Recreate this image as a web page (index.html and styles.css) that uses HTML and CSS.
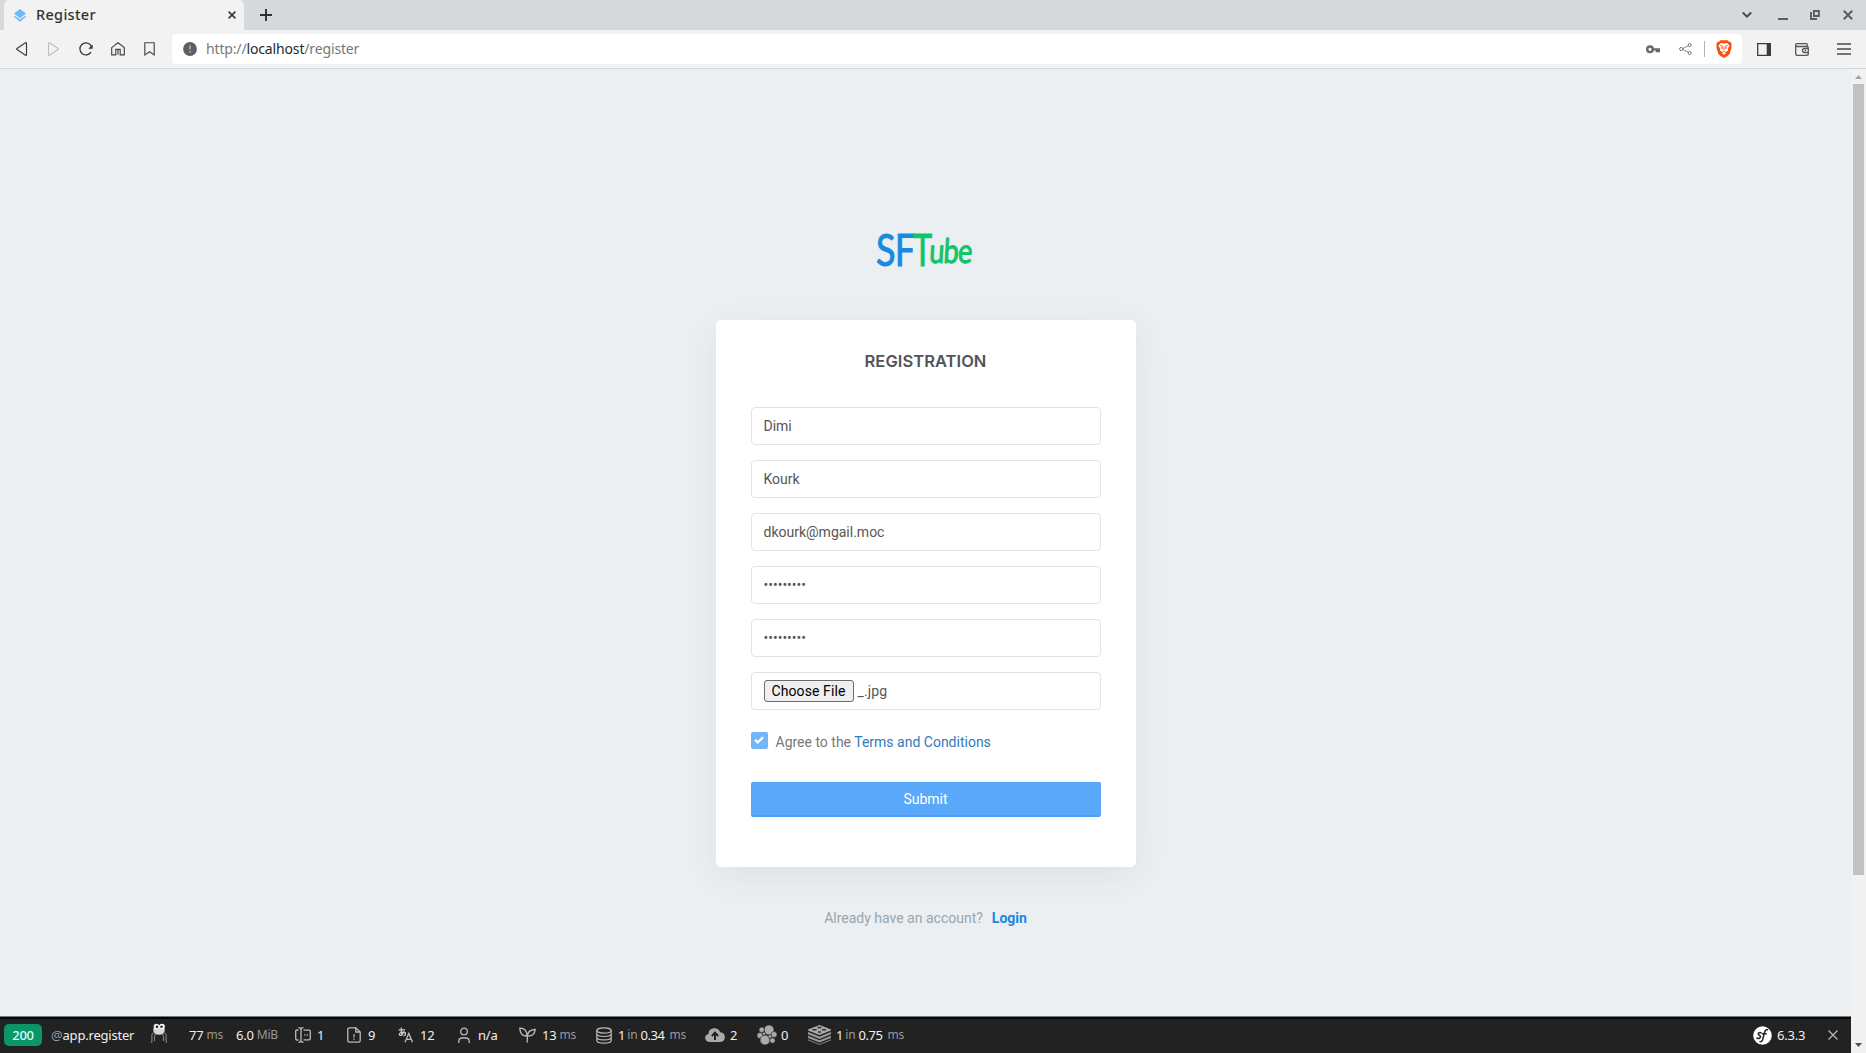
FILE: index.html
```html
<!DOCTYPE html>
<html lang="en">
<head>
<meta charset="utf-8">
<title>Register</title>
<link rel="stylesheet" href="styles.css">
</head>
<body>
<div class="window">
  <header class="tabstrip">
    <div class="tab">
      <svg class="favicon" width="12" height="13" viewBox="0 0 12 13"><path d="M6 0l6 4.600-6 4.600L0 4.600z" fill="#71b6f9"/><path d="M0 7.800l1.200-.9L6 10.600l4.800-3.700 1.200.9L6 12.800z" fill="#71b6f9"/></svg>
      <span class="tab-title">Register</span>
      <svg class="tab-close" width="8" height="8" viewBox="0 0 8 8"><path d="M.6.6l6.800 6.800M7.400.6L.6 7.400" stroke="#333" stroke-width="1.500"/></svg>
    </div>
    <svg class="new-tab" width="12" height="12" viewBox="0 0 12 12"><path d="M6 0v12M0 6h12" stroke="#303030" stroke-width="1.900"/></svg>
    <div class="window-controls">
      <svg width="10" height="8" viewBox="0 0 10 8"><path d="M.8 1.500L5 5.700l4.200-4.200" fill="none" stroke="#444a4e" stroke-width="2"/></svg>
      <svg width="10" height="10" viewBox="0 0 10 10"><path d="M0 9h10" stroke="#585e62" stroke-width="2"/></svg>
      <svg width="10" height="10" viewBox="0 0 10 10"><path d="M3.900 1h5v5h-5z M1 2v7h6" fill="none" stroke="#585e62" stroke-width="1.900"/></svg>
      <svg width="10" height="10" viewBox="0 0 10 10"><path d="M.8.8l8.400 8.400M9.200.8L.8 9.200" stroke="#585e62" stroke-width="2"/></svg>
    </div>
  </header>

  <nav class="navbar">
    <div class="nav-buttons">
      <svg width="12" height="14" viewBox="0 0 12 14"><path d="M9.500.8Q10.500.4 10.500 1.500v11Q10.500 13.600 9.500 13.200L1 7.500Q.4 7 1 6.500z" fill="none" stroke="#3b3e42" stroke-width="1.200"/></svg>
      <svg width="12" height="14" viewBox="0 0 12 14"><path d="M2.500.8Q1.500.4 1.500 1.500v11Q1.500 13.600 2.500 13.200L11 7.500Q11.600 7 11 6.500z" fill="none" stroke="#bcbfc1" stroke-width="1.100"/></svg>
      <svg width="14" height="14" viewBox="0 0 14 14"><path d="M12 10.200A6 6 0 1 1 11.600 3.200L12.600 5" fill="none" stroke="#303337" stroke-width="1.250"/><path d="M13.600 2.500v4.300H9.300z" fill="#303337"/></svg>
      <svg width="14" height="14" viewBox="0 0 14 14"><path d="M.7 5.600L7 .8l6.300 4.800v7.200H9.200V7.300H4.800v5.500H.7zM7 7.300v5.500" fill="none" stroke="#42464a" stroke-width="1.150"/></svg>
      <svg width="11" height="14" viewBox="0 0 11 14"><path d="M.8.7h9.400v12.200L5.500 9.800.8 12.900z" fill="none" stroke="#42464a" stroke-width="1.150"/></svg>
    </div>
    <div class="address">
      <svg width="14" height="14" viewBox="0 0 14 14"><circle cx="7" cy="7" r="6.900" fill="#5b6065"/><path d="M7 3.500v4M7 9v1.700" stroke="#adb0b2" stroke-width="1.600"/></svg>
      <span class="url">http://<b>localhost</b>/register</span>
      <div class="address-actions">
        <svg width="14" height="9" viewBox="0 0 14 9"><path d="M6.500 4.300H14M10.700 4.300v3M12.900 4.300v2.900" stroke="#686b6e" stroke-width="2.200"/><circle cx="4" cy="4.300" r="2.800" fill="none" stroke="#686b6e" stroke-width="2.400"/></svg>
        <svg width="13" height="12" viewBox="0 0 13 12"><path d="M3 6l7-3.700M3 6l7 3.700" stroke="#85888a"/><g fill="#fff" stroke="#777a7c"><circle cx="2.200" cy="6" r="1.600"/><circle cx="10.600" cy="2" r="1.500"/><circle cx="10.600" cy="10" r="1.500"/></g></svg>
        <i class="divider"></i>
        <svg width="16" height="18" viewBox="0 0 16 18"><path d="M4.500.2h7l1.600 1.600 1.500.2 1.200 2.400-.5 1.300.4 1.200-2 7-2.200 2.200L8 18l-3.500-1.900-2.200-2.200-2-7 .4-1.200-.5-1.300L1.400 2l1.500-.2z" fill="#fb5013"/><path d="M4.800 3L8 3.500 11.200 3l2.300 2.700-1.800 3 .4 1.700-2.500 1.700L8 11l-1.600 1.100-2.500-1.700.4-1.700-1.800-3zM6 12.900l2-1.200 2 1.200-2 1.800z" fill="#fff"/><path d="M4.300 5.500l2.400.6L7 8.500 5 7.600M11.700 5.500l-2.400.6L9 8.500l2-.9M8 8.500v2" fill="none" stroke="#fb5013" stroke-width=".9"/></svg>
      </div>
    </div>
    <div class="nav-tools">
      <svg width="14" height="13" viewBox="0 0 14 13"><path d="M.7.7h12.600v11.600H.7z" fill="none" stroke="#383d42" stroke-width="1.300"/><path d="M9.700 0H14v13H9.700z" fill="#383d42"/></svg>
      <svg width="14" height="13" viewBox="0 0 14 13"><path d="M12.300 3.500V1.600Q12.300.7 11.400.7H1.700Q.7.700.7 1.700v9.300q0 1.300 1.300 1.300h10q1.300 0 1.300-1.300V4.800q0-1.300-1.300-1.300H2Q.7 3.500.7 2M13.300 5.500h-3.500q-2.300 0-2.300 2t2.300 2h3.500M9.800 7.500H11" fill="none" stroke="#54585c" stroke-width="1.300"/></svg>
      <svg width="14" height="12" viewBox="0 0 14 12"><path d="M0 1h14M0 6h14M0 11h14" stroke="#484c50" stroke-width="1.400"/></svg>
    </div>
  </nav>

  <div class="viewport">
    <div class="page">
      <main class="content">
        <h1 class="logo"><span class="logo-s">SF</span><span class="logo-t">T</span><span class="logo-ube">ube</span></h1>
        <form class="card">
          <h2>Registration</h2>
          <div class="field">Dimi</div>
          <div class="field">Kourk</div>
          <div class="field">dkourk@mgail.moc</div>
          <div class="field password">•••••••••</div>
          <div class="field password">•••••••••</div>
          <div class="field file"><button type="button">Choose File</button><span>_.jpg</span></div>
          <div class="agree">
            <span class="checkbox"><svg width="10" height="8" viewBox="0 0 10 8"><path d="M1 3.800l2.700 2.600L9 1.200" fill="none" stroke="#fff" stroke-width="2.300"/></svg></span>
            <span>Agree to the <a>Terms and Conditions</a></span>
          </div>
          <button type="button" class="submit">Submit</button>
        </form>
        <p class="signin">Already have an account?<a>Login</a></p>
      </main>

      <footer class="debugbar">
        <div class="blocks">
          <div class="block"><span class="status">200</span></div>
          <div class="block route"><i>@</i>app.register</div>
          <div class="block"><svg class="lift" width="18" height="21" viewBox="0 0 18 21"><path d="M4.500 10Q1 9.500 2 15l-.3 5M13.500 10q3.500-.5 2.500 5l.3 5M5.500 11Q4 12 4.500 18M12.500 11q1.500 1 1 7" fill="none" stroke="#999" stroke-width=".9"/><ellipse cx="9" cy="7" rx="5.800" ry="4.800" fill="#d8d8d8"/><circle cx="6.500" cy="3.500" r="2.800" fill="#eee"/><circle cx="12" cy="3.500" r="2.800" fill="#fff"/><circle cx="7" cy="3.800" r="1.300" fill="#222"/><circle cx="11.500" cy="3.800" r="1.300" fill="#222"/></svg></div>
          <div class="block">77<i>ms</i></div>
          <div class="block">6.0<i>MiB</i></div>
          <div class="block g6"><svg width="16" height="16" viewBox="0 0 16 16"><path d="M3.500 3H2Q.7 3 .7 4.300v7.400Q.7 13 2 13h1.500M8.500 3.200h5.500q1.300 0 1.300 1.300v7q0 1.300-1.300 1.300H8.500M3.500.7Q6 .7 6 2.500 6 .7 8.500.7M6 2v12M3.500 15.300Q6 15.300 6 13.500q0 1.800 2.500 1.800" fill="none" stroke="#bbb" stroke-width="1.300"/><path d="M9 8h1.500M11.500 8H13" stroke="#999" stroke-width="1.300"/></svg>1</div>
          <div class="block g7"><svg width="14" height="16" viewBox="0 0 14 16"><path d="M8.800.8H2.500Q.8.8.8 2.500v11q0 1.700 1.700 1.700h9q1.700 0 1.700-1.700V5L8.800.8V5h4.400" fill="none" stroke="#bbb" stroke-width="1.300"/><path d="M7 7v3.700M7 11.800v1.300" stroke="#aaa" stroke-width="1.300"/></svg>9</div>
          <div class="block g7"><svg width="15" height="16" viewBox="0 0 15 16"><path d="M.5 2.800H7M3.300.6Q2.800 5 4 8.800M6 4.200Q4.500 8.500 2 8.500.2 7.800 2.500 5.800 6 4.300 7.500 6q.6 2.200-2 3" fill="none" stroke="#ccc" stroke-width="1.200"/><path d="M7 15.200L10.800 6.500l3.700 8.700M8.300 12.300h5" fill="none" stroke="#bbb" stroke-width="1.300"/></svg>12</div>
          <div class="block g8"><svg width="12" height="17" viewBox="0 0 12 17"><circle cx="6" cy="4.500" r="3.300" fill="none" stroke="#bbb" stroke-width="1.300"/><path d="M.8 16v-1.500Q.8 11 4 11h4q3.200 0 3.200 3.500V16" fill="none" stroke="#bbb" stroke-width="1.300"/></svg>n/a</div>
          <div class="block g6"><svg width="17" height="16" viewBox="0 0 17 16"><path d="M8 9Q1 9 .8 1.200 8 1 8 9zM8.500 9q0-6 7.700-6.500Q15.500 9.500 8.300 9V15.500" fill="none" stroke="#bbb" stroke-width="1.300"/></svg>13<i>ms</i></div>
          <div class="block timing g6"><svg width="16" height="17" viewBox="0 0 16 17"><path d="M.8 3.500v10Q.8 16.200 8 16.200t7.200-2.700v-10M.8 6.800Q.8 9.500 8 9.500t7.200-2.700M.8 10.200Q.8 12.900 8 12.900t7.200-2.700" fill="none" stroke="#bbb" stroke-width="1.200"/><ellipse cx="8" cy="3.500" rx="7.200" ry="2.700" fill="none" stroke="#bbb" stroke-width="1.200"/></svg>1<i>in</i><span class="near">0.34</span><i class="far">ms</i></div>
          <div class="block g5"><svg width="20" height="14" viewBox="0 0 20 14"><path d="M5 14Q.2 13.800.2 9.700.3 6.500 3.500 6 3.500 1 8.500.2q5-.4 6.700 4 4.600.7 4.700 5-.3 4.500-5 4.800z" fill="#aaa"/><path d="M10 12V5M6.800 8L10 4.600 13.200 8" fill="none" stroke="#222" stroke-width="2"/></svg>2</div>
          <div class="block g4"><svg width="20" height="20" viewBox="0 0 20 20"><g fill="#aaa" stroke="#222" stroke-width=".6"><circle cx="12" cy="5" r="5"/><circle cx="4.700" cy="4.800" r="2.700"/><circle cx="3" cy="10.500" r="3"/><circle cx="8" cy="15" r="5"/><circle cx="17" cy="9.500" r="3"/><circle cx="15.500" cy="15.500" r="2.700"/><circle cx="7" cy="8.700" r="1.600"/><circle cx="13" cy="11.500" r="1.800"/></g></svg>0</div>
          <div class="block timing g5"><svg width="23" height="20" viewBox="0 0 23 20"><path d="M11.500 0L23 4.500v1L11.500 10 0 5.500v-1z" fill="#aaa"/><path d="M0 7l11.500 4.600L23 7v2.300l-11.500 4.600L0 9.300zM0 10.700l11.500 4.600L23 10.700V13l-11.500 4.600L0 13z" fill="#999"/><path d="M0 14.300l11.500 4.600L23 14.300v1.200L11.500 20 0 15.500z" fill="#777"/><path d="M9.500 2.500h4M4.500 4.800h4M14 4.800h4M10 7h3" stroke="#333" stroke-width="1.400"/></svg>1<i>in</i><span class="near">0.75</span><i class="far">ms</i></div>
        </div>
        <div class="version"><svg width="19" height="19" viewBox="0 0 19 19"><circle cx="9.500" cy="9.500" r="9.300" fill="#fff"/><path d="M8.500 7.200Q7 6 5.500 7.200 4.700 8.600 6.500 9.300 8.500 10.700 6.800 12 5 13 3.500 11.600M15 4.300Q13 2.200 11.500 6.500L9.700 13.500Q8.700 16.500 6.500 15.400M8.700 7.700h5" fill="none" stroke="#222" stroke-width="1.500"/></svg>6.3.3</div>
        <svg class="bar-close" width="10" height="10" viewBox="0 0 10 10"><path d="M.5.5l9 9M9.500.5l-9 9" stroke="#bbb" stroke-width="1.200"/></svg>
      </footer>
    </div>
    <aside class="scrollbar">
      <svg width="7" height="4" viewBox="0 0 7 4"><path d="M3.500 0L7 4H0z" fill="#a3a3a3"/></svg>
      <div class="thumb"></div>
      <svg width="7" height="4" viewBox="0 0 7 4"><path d="M0 0h7L3.500 4z" fill="#505050"/></svg>
    </aside>
  </div>
</div>
</body>
</html>
```
FILE: styles.css
```css
* { box-sizing: border-box; }
body { margin: 0; font-family: Roboto, "Liberation Sans", sans-serif; font-size: 14px; }
svg { display: block; flex: none; }
i { font-style: normal; }
.window { width: 1866px; height: 1053px; display: flex; flex-direction: column; overflow: hidden; }

/* Browser chrome */
.tabstrip { height: 30px; flex: none; display: flex; align-items: center; background: #d5d9dc; padding-left: 4px; }
.tab { width: 240px; height: 30px; background: #f2f2f2; border-radius: 5px 5px 0 0; display: flex; align-items: center; padding: 0 8px 0 10px; }
.tab-title { font: 500 14.5px/28px "Noto Sans", sans-serif; color: #303235; margin: 0 0 2px 10px; letter-spacing: .3px; }
.tab-close { margin-left: auto; }
.new-tab { margin-left: 16px; }
.window-controls { margin-left: auto; margin-right: 13px; display: flex; align-items: center; gap: 23px; }
.window-controls svg:first-child { margin-right: 3px; }
.window-controls svg:nth-child(3) { margin-right: -1px; margin-left: -1px; }
.window-controls svg:last-child { margin-left: 1px; }
.navbar { height: 39px; flex: none; display: flex; align-items: center; background: #f2f2f2; border-bottom: 1px solid #d3d7da; }
.nav-buttons { width: 172px; padding-left: 16px; display: flex; align-items: center; gap: 19px; }
.nav-buttons svg:nth-child(3) { margin: 0 -1px 0 1px; }
.address { width: 1570px; height: 30px; background: #fff; border-radius: 4px; display: flex; align-items: center; padding: 0 10px 0 11px; }
.url { font: 14px/30px "Noto Sans", sans-serif; color: #75797c; margin-left: 9px; letter-spacing: -.15px; }
.url b { font-weight: 400; color: #26292c; }
.address-actions { margin-left: auto; display: flex; align-items: center; }
.address-actions svg:nth-child(2) { margin-left: 19px; }
.divider { width: 1px; height: 16px; background: #b0b3b5; margin: 0 11px 0 12px; }
.nav-tools { margin-left: 15px; display: flex; align-items: center; gap: 24px; }
.nav-tools svg:last-child { margin-left: 4px; }

/* Page */
.viewport { flex: 1; display: flex; min-height: 0; }
.page { width: 1851px; display: flex; flex-direction: column; background: #ebeff2; }
.content { flex: 1; display: flex; flex-direction: column; align-items: center; }
.logo { margin: 154px 0 0; height: 97px; width: 99px; display: flex; align-items: baseline; font: 400 45px/52px Lato, sans-serif; }
.logo span { display: inline-block; transform-origin: left bottom; -webkit-text-stroke: 1px currentColor; }
.logo-s { width: 37px; color: #188ae2; transform: scaleX(.8); letter-spacing: -1px; }
.logo-t { width: 16px; color: #10c469; transform: scaleX(.72); }
.logo-ube { width: 46px; color: #10c469; transform: translate(-1px, -3px) scaleX(.8) skewX(-4deg); font-size: 34px; letter-spacing: -1px; }
.card { width: 420px; height: 547px; background: #fff; border-radius: 5px; padding: 30px 35px 0; box-shadow: 0 8px 35px 0 rgba(49, 62, 72, .075); display: flex; flex-direction: column; }
h2 { margin: 0 0 34px; text-align: center; text-transform: uppercase; color: #505458; font: 600 16.5px/23px Inter, Roboto, sans-serif; letter-spacing: .05px; }
.field { height: 38px; flex: none; margin-bottom: 15px; border: 1px solid #e3e3e3; border-radius: 4px; padding: 0 12px; color: #565656; line-height: 36px; }
.file { display: flex; align-items: center; gap: 4px; }
.file button { width: 90px; height: 22px; padding: 0; background: #efefef; border: 1px solid #6b6b6b; border-radius: 3px; font: 14px/18px Roboto, sans-serif; letter-spacing: .1px; color: #000; }
.file span { letter-spacing: .15px; }
.agree { display: flex; align-items: center; gap: 8px; height: 20px; margin-top: 7px; color: #797979; }
.agree a { color: #337ab7; }
.checkbox { width: 17px; height: 17px; background: #71b6f9; border-radius: 2px; display: grid; place-items: center; margin-bottom: 4px; }
.submit { height: 35px; margin-top: 30px; border: 1px solid #58a5f8; border-bottom: 2px solid #4c9ff5; border-radius: 2px; background: #5aa8f9; color: #fff; font: 14px Roboto, sans-serif; }
.signin { margin: 41px 0 0; line-height: 20px; color: #98a6ad; }
.signin a { margin-left: 9px; color: #188ae2; font-weight: 700; }

/* Debug toolbar */
.debugbar { height: 37px; flex: none; display: flex; align-items: center; background: #222; border-top: 1px solid #777; box-shadow: inset 0 2px 0 #050505; font: 13px/36px "Noto Sans", sans-serif; color: #f0f0f0; letter-spacing: -.2px; }
.debugbar i { color: #999; margin-left: 3px; font-size: 12px; }
.blocks { flex: 1; padding-left: 4px; display: grid; grid-template-columns: 47px 99px 39px 47px 59px 52px 51px 60px 61px 77px 109px 52px 51px 1fr; }
.block { height: 36px; display: flex; align-items: center; white-space: nowrap; }
.block svg { margin-right: 6px; }
.block .lift { margin-top: -3px; }
.g7 svg { margin-right: 7px; }
.g8 svg { margin-right: 8px; }
.g5 svg { margin-right: 5px; }
.g4 svg { margin-right: 4px; }
.status { width: 38px; height: 22px; border-radius: 5px; background: #0a9666; color: #dff; text-align: center; font-weight: 500; line-height: 22px; }
.debugbar .route i { margin: 0; font-size: 13px; }
.debugbar .timing i { margin-left: 2px; }
.near { margin-left: 3px; letter-spacing: -.4px; }
.debugbar .timing .far { margin-left: 5px; }
.version { display: flex; align-items: center; gap: 5px; width: 75px; }
.bar-close { margin-right: 13px; }

.scrollbar { width: 15px; background: #f1f1f1; display: flex; flex-direction: column; align-items: center; padding: 6px 0; }
.thumb { width: 11px; height: 791px; margin: 5px 0 auto; background: #c1c1c1; }
```
